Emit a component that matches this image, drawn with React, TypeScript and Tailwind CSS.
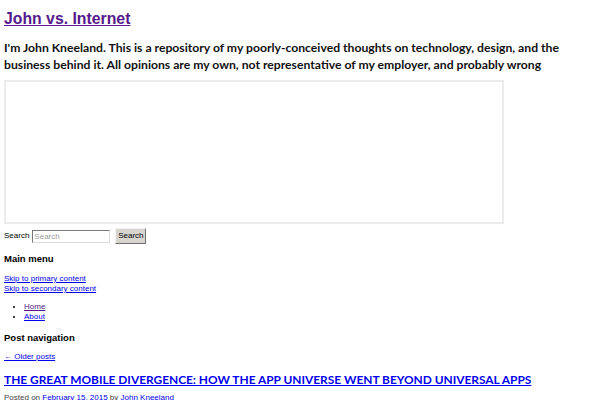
export default function App() {
  const small = "font-['Liberation_Sans',Arial,sans-serif] text-[8px] leading-[10px]";
  const heading = "font-['Liberation_Sans',Arial,sans-serif] text-[9.5px] leading-[11px] font-bold text-black";

  return (
    <div className="min-h-screen bg-white px-[4px] text-black">
      <h1 className="mt-[9px] font-['Liberation_Sans',Arial,sans-serif] text-[15.8px] leading-[20px] font-bold">
        <a href="#" className="text-[#551a8b] underline">
          John vs. Internet
        </a>
      </h1>

      <p className="mt-[10px] whitespace-nowrap font-['Lato',sans-serif] text-[12.2px] leading-[17px] font-bold text-[#111]">
        I'm John Kneeland. This is a repository of my poorly-conceived thoughts on technology, design, and the
        <br />
        business behind it. All opinions are my own, not representative of my employer, and probably wrong
      </p>

      <div className="mt-[7px] h-[144px] w-[500px] border-2 border-[#ebebeb] bg-white" />

      <form className={`mt-[4px] flex items-center gap-[3px] ${small}`} onSubmit={(e) => e.preventDefault()}>
        <label>Search</label>
        <input
          placeholder="Search"
          className="h-[13px] w-[78px] border border-t-[#7a7a7a] border-l-[#7a7a7a] border-r-[#dcdcdc] border-b-[#dcdcdc] px-[1px] text-[8px] placeholder:text-[#9a9a9a]"
        />
        <button
          type="submit"
          className="ml-[2px] h-[16px] w-[31px] border border-t-[#f2f2f2] border-l-[#f2f2f2] border-r-[#6e6e6e] border-b-[#6e6e6e] bg-[#d8d5cf] text-[8px] leading-[14px]"
        >
          Search
        </button>
      </form>

      <h3 className={`mt-[9px] ${heading}`}>Main menu</h3>

      <div className={`mt-[10px] ${small}`}>
        <div>
          <a href="#" className="text-[#0000ee] underline">Skip to primary content</a>
        </div>
        <div>
          <a href="#" className="text-[#0000ee] underline">Skip to secondary content</a>
        </div>
      </div>

      <ul className={`mt-[8px] list-disc pl-[20px] ${small}`}>
        <li>
          <a href="#" className="text-[#551a8b] underline">Home</a>
        </li>
        <li>
          <a href="#" className="text-[#0000ee] underline">About</a>
        </li>
      </ul>

      <h3 className={`mt-[10px] ${heading}`}>Post navigation</h3>

      <div className={`mt-[9px] ${small}`}>
        <a href="#" className="text-[#0000ee] underline">← Older posts</a>
      </div>

      <h2 className="mt-[10px] font-['Lato',sans-serif] text-[11.9px] leading-[16px] font-bold uppercase">
        <a href="#" className="text-[#0000ee] underline">
          The Great Mobile Divergence: How the App Universe Went Beyond Universal Apps
        </a>
      </h2>

      <div className={`mt-[5px] text-[#444] ${small}`}>
        Posted on{" "}
        <a href="#" className="text-[#0000ee]">February 15, 2015</a> by{" "}
        <a href="#" className="text-[#0000ee]">John Kneeland</a>
      </div>
    </div>
  );
}
